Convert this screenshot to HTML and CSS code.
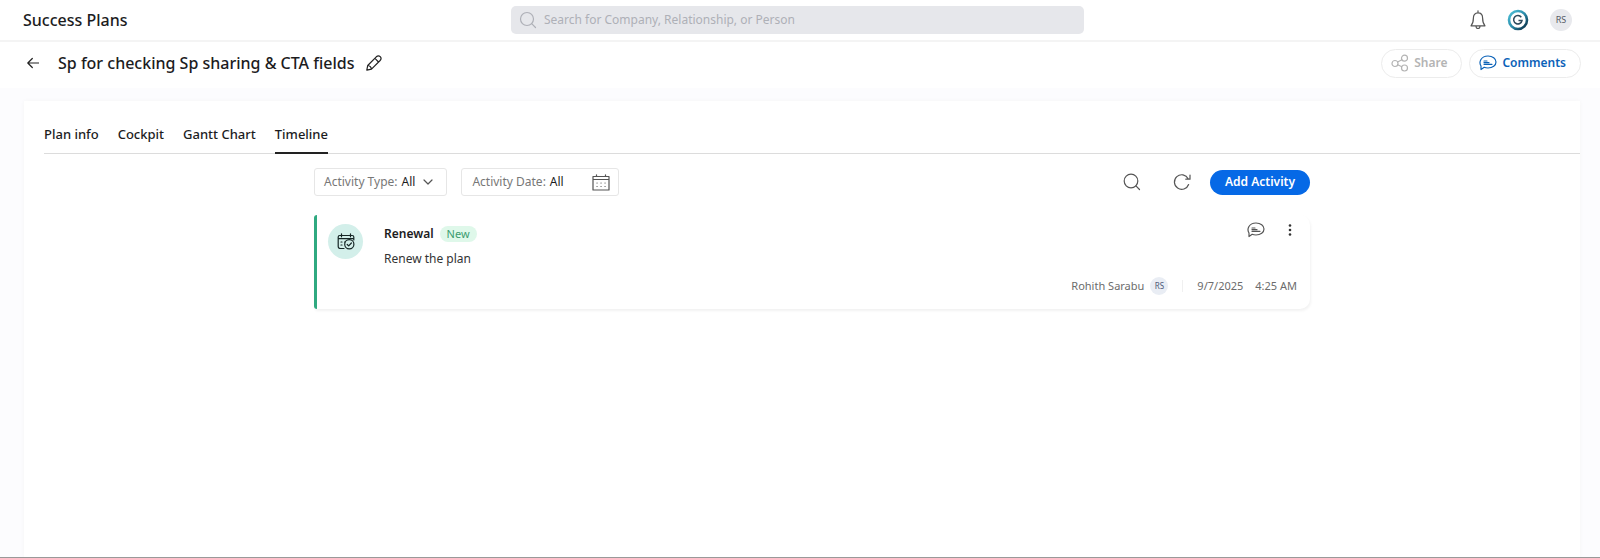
FILE: index.html
```html
<!DOCTYPE html>
<html lang="en">
<head>
<meta charset="utf-8">
<title>Success Plans</title>
<link rel="stylesheet" href="styles.css">
</head>
<body>
<header class="topbar">
  <h1 class="app-title">Success Plans</h1>
  <label class="search">
    <svg class="icon search-icon" width="18" height="18" viewBox="0 0 18 18"><circle cx="8" cy="8" r="6.5"/><path d="M12.7 12.7 16.5 16.5"/></svg>
    <input class="search-input" type="text" aria-label="Search" placeholder="Search for Company, Relationship, or Person">
  </label>
  <div class="top-actions">
    <button class="icon-button" aria-label="Notifications">
      <svg class="icon" width="16" height="20" viewBox="0 0 16 20"><path d="M8 .8v2M8 2.8C4.8 2.8 3.4 5 3.4 8c0 4-.8 6-2.4 7.8h14C13.400 14 12.600 12 12.600 8c0-3-1.400-5.200-4.600-5.200zM6 16c0 1.800 1 2.500 2 2.500s2-.7 2-2.500"/></svg>
    </button>
    <button class="icon-button" aria-label="Gainsight">
      <svg width="22" height="22" viewBox="0 0 22 22">
        <defs><linearGradient id="ring" x1="0" y1="0" x2="1" y2="1"><stop offset="0" stop-color="#4fc3d9"/><stop offset=".5" stop-color="#2b8cab"/><stop offset="1" stop-color="#06263c"/></linearGradient></defs>
        <circle cx="11" cy="11" r="9" fill="#fff" stroke="url(#ring)" stroke-width="2.600"/>
        <path d="M14.300 8.300A4.200 4.200 0 1 0 15 11.500H11.500" fill="none" stroke="#2c4a5c" stroke-width="1.500"/>
      </svg>
    </button>
    <button class="avatar" aria-label="Profile">RS</button>
  </div>
</header>

<div class="plan-bar">
  <button class="icon-button dark" aria-label="Back">
    <svg class="icon" width="12" height="12" viewBox="0 0 12 12"><path d="M11.500 6H1M5.300 1.500.8 6l4.500 4.500"/></svg>
  </button>
  <h2 class="plan-title">Sp for checking Sp sharing &amp; CTA fields</h2>
  <button class="icon-button dark" aria-label="Edit name">
    <svg class="icon" width="16" height="16" viewBox="0 0 16 16"><path d="M.8 15.200l.9-4.700 8.600-8.700c1.300-1.200 2.900-1.100 3.900-.1s1 2.600-.1 3.800L5.500 14.200zM9.700 4.200l2.300 2.300M1.700 10.500c2 .2 3.500 1.700 3.800 3.700"/></svg>
  </button>
  <div class="plan-actions">
    <button class="pill share" disabled>
      <svg class="icon" width="18" height="18" viewBox="0 0 18 18"><circle cx="4" cy="9.500" r="3"/><circle cx="13.500" cy="4.200" r="3"/><circle cx="13.500" cy="14" r="3"/><path d="M6.600 8 10.900 5.700M6.700 10.800l4.100 1.900"/></svg>
      Share
    </button>
    <button class="pill comments">
      <svg class="icon" width="18" height="16" viewBox="0 0 18 16"><path d="M2 14.500V11C-.5 7 2 1 9 1c4.600 0 8 2.500 8 6s-3.400 6-8 6c-1.500 0-2.700-.2-3.800-.7zM5 6h3M5 7.700h5M5 9.300h8"/></svg>
      Comments
    </button>
  </div>
</div>

<main class="panel">
  <nav class="tabs">
    <a class="tab" href="#info">Plan info</a>
    <a class="tab" href="#cockpit">Cockpit</a>
    <a class="tab" href="#gantt">Gantt Chart</a>
    <a class="tab active" href="#timeline" aria-current="page">Timeline</a>
  </nav>

  <section class="timeline">
    <div class="toolbar">
      <button class="filter">
        <span class="filter-name">Activity Type:</span>
        <span>All</span>
        <svg class="icon chevron" width="10" height="6" viewBox="0 0 10 6"><path d="M1 1l4 4 4-4"/></svg>
      </button>
      <button class="filter date">
        <span class="filter-name">Activity Date:</span>
        <span>All</span>
        <svg class="icon calendar" width="18" height="17" viewBox="0 0 18 17"><path d="M1 2.500h16v13.500H1zM1 5.500h16M4.500.8v1.700M13.500.8v1.700"/><path d="M5 9h.1M9 9h.1M13 9h.1M5 12.500h.1M9 12.500h.1M13 12.500h.1"/></svg>
      </button>
      <div class="tools">
        <button class="icon-button" aria-label="Search activities">
          <svg class="icon" width="18" height="18" viewBox="0 0 18 18"><circle cx="8" cy="8" r="6.800"/><path d="M12.900 12.900 16.500 16.500"/></svg>
        </button>
        <button class="icon-button" aria-label="Refresh">
          <svg class="icon" width="18" height="18" viewBox="0 0 18 18"><path d="M15.600 11.500A7.300 7.300 0 1 1 15.200 5.700M17 2v4.200h-4.200"/></svg>
        </button>
        <button class="add">Add Activity</button>
      </div>
    </div>

    <article class="card">
      <span class="card-badge">
        <svg class="icon" width="18" height="17" viewBox="0 0 18 17"><path d="M7 15.500H3.500C2 15.500 1.200 14.700 1.200 13.500V4c0-1 .6-1.500 1.500-1.500h12.500c1 0 1.600.6 1.600 1.500v3M1.200 5.700h15.600M4.500.8v3M13.500.8v3M4 9h1M4 12h1M7.500 9H8"/><circle cx="12.300" cy="11.300" r="4.600"/><path d="M10.200 11.500l1.500 1.400 2.700-2.900"/></svg>
      </span>
      <div class="card-text">
        <div class="card-head"><h3 class="card-title">Renewal</h3><span class="tag">New</span></div>
        <p class="card-note">Renew the plan</p>
      </div>
      <div class="card-tools">
        <button class="icon-button" aria-label="Comments on activity">
          <svg class="icon" width="18" height="16" viewBox="0 0 18 16"><path d="M2 14.500V11C-.5 7 2 1 9 1c4.600 0 8 2.500 8 6s-3.400 6-8 6c-1.500 0-2.700-.2-3.800-.7zM5 6h3M5 7.700h5M5 9.300h8"/></svg>
        </button>
        <button class="icon-button" aria-label="More">
          <svg width="4" height="12" viewBox="0 0 4 12" fill="#333"><circle cx="2" cy="1.500" r="1.300"/><circle cx="2" cy="6" r="1.300"/><circle cx="2" cy="10.500" r="1.300"/></svg>
        </button>
      </div>
      <footer class="card-meta">
        <span>Rohith Sarabu</span>
        <span class="mini-avatar">RS</span>
        <span class="divider"></span>
        <span>9/7/2025</span>
        <span class="time">4:25 AM</span>
      </footer>
    </article>
  </section>
</main>
</body>
</html>
```
FILE: styles.css
```css
* {
  box-sizing: border-box;
}

body {
  margin: 0;
  min-height: 100vh;
  display: flex;
  flex-direction: column;
  background: #fcfcfe;
  border-bottom: 1px solid #999;
  font-family: "Noto Sans", sans-serif;
  font-size: 12px;
  line-height: 20px;
  color: #1c1c1e;
}

h1, h2, h3, p {
  margin: 0;
}

button, input {
  font: inherit;
  color: inherit;
}

button {
  border: 0;
  padding: 0;
  background: none;
  cursor: pointer;
}

.icon {
  display: block;
  fill: none;
  stroke: currentColor;
  stroke-width: 1.2;
  stroke-linecap: round;
  stroke-linejoin: round;
}

.icon-button {
  display: flex;
  color: #555;
}

.icon-button.dark {
  color: #222;
}

.topbar {
  display: grid;
  grid-template-columns: 1fr 37% 1fr;
  align-items: center;
  height: 42px;
  padding: 0 28px 0 23px;
  background: #fff;
  border-bottom: 2px solid #f4f4f4;
}

.app-title {
  font-size: 16px;
  font-weight: 500;
}

.search {
  display: flex;
  align-items: center;
  gap: 7px;
  height: 28px;
  padding: 0 8px;
  border-radius: 5px;
  background: #e6e7eb;
  color: #aeb0b7;
}

.search-input {
  flex: 1;
  min-width: 0;
  border: 0;
  padding: 0;
  outline: 0;
  background: none;
}

.search-input::placeholder {
  color: #aeb0b7;
  opacity: 1;
}

.top-actions {
  display: flex;
  justify-content: flex-end;
  align-items: center;
  gap: 21px;
}

.avatar {
  width: 22px;
  height: 22px;
  border-radius: 50%;
  background: #e8e9ed;
  color: #555a66;
  font-size: 9px;
  line-height: 22px;
}

.plan-bar {
  display: flex;
  align-items: center;
  height: 46px;
  padding: 0 19px 4px 27px;
  background: #fff;
}

.plan-title {
  margin: 0 12px 0 19px;
  font-size: 16px;
  font-weight: 500;
}

.plan-actions {
  display: flex;
  gap: 7px;
  margin-left: auto;
}

.pill {
  display: flex;
  align-items: center;
  gap: 5px;
  height: 29px;
  padding: 0 14px 0 9px;
  border: 1px solid #ececec;
  border-radius: 15px;
  font-weight: 600;
}

.share {
  color: #b4b4b4;
}

.comments {
  color: #0b62b8;
}

.panel {
  flex: 1;
  margin: 13px 20px 0 24px;
  padding: 23px 0 0 20px;
  background: #fff;
  box-shadow: 0 0 4px #f6f6f6;
}

.tabs {
  display: flex;
  gap: 19px;
  border-bottom: 1px solid #dcdcdc;
}

.tab {
  height: 30px;
  margin-bottom: -1px;
  border-bottom: 2px solid transparent;
  color: inherit;
  font-size: 13px;
  font-weight: 500;
  text-decoration: none;
}

.tab.active {
  border-color: #222;
}

.timeline {
  max-width: 996px;
  margin: 0 auto;
}

.toolbar {
  display: flex;
  align-items: center;
  gap: 14px;
  padding: 14px 0 19px;
}

.filter {
  display: flex;
  align-items: center;
  gap: 4px;
  height: 28px;
  padding: 0 13px 0 9px;
  border: 1px solid #e6e6e6;
  border-radius: 3px;
}

.filter.date {
  width: 158px;
  padding: 0 8px 0 10px;
}

.filter-name {
  color: #777;
}

.chevron {
  margin-left: 4px;
  color: #555;
}

.calendar {
  margin-left: auto;
  color: #555;
}

.tools {
  display: flex;
  align-items: center;
  gap: 32px;
  margin-left: auto;
}

.add {
  height: 25px;
  margin-left: -13px;
  padding: 0 15px;
  border-radius: 13px;
  background: #0669e6;
  color: #fff;
  font-weight: 600;
}

.card {
  display: grid;
  grid-template-columns: auto 1fr auto;
  column-gap: 21px;
  padding: 9px 13px 14px 11px;
  border-left: 3px solid #2fa980;
  border-radius: 3px 10px 10px 3px;
  background: #fff;
  box-shadow: 1px 2px 3px #f2f2f2;
}

.card-badge {
  display: grid;
  place-items: center;
  width: 35px;
  height: 35px;
  border-radius: 50%;
  background: #d3efea;
  color: #152525;
}

.card-head {
  display: flex;
  align-items: center;
  gap: 6px;
}

.card-title {
  font-size: 12px;
  font-weight: 600;
}

.tag {
  padding: 0 7px;
  border-radius: 8px;
  background: #dff8ea;
  color: #3c9c70;
  font-size: 11px;
  line-height: 16px;
}

.card-note {
  margin-top: 5px;
  color: #333;
}

.card-tools {
  display: flex;
  align-items: center;
  gap: 23px;
  height: 12px;
  padding-right: 5px;
}

.card-meta {
  grid-column: 1 / -1;
  display: flex;
  justify-content: flex-end;
  align-items: center;
  margin-top: 8px;
  color: #6c6c6c;
  font-size: 11px;
  line-height: 18px;
}

.mini-avatar {
  width: 18px;
  margin-left: 6px;
  border-radius: 50%;
  background: #e9edf4;
  color: #4e5a78;
  font-size: 8px;
  text-align: center;
}

.divider {
  width: 1px;
  height: 12px;
  margin: 0 14px;
  background: #f0f0f0;
}

.time {
  margin-left: 12px;
}
```
